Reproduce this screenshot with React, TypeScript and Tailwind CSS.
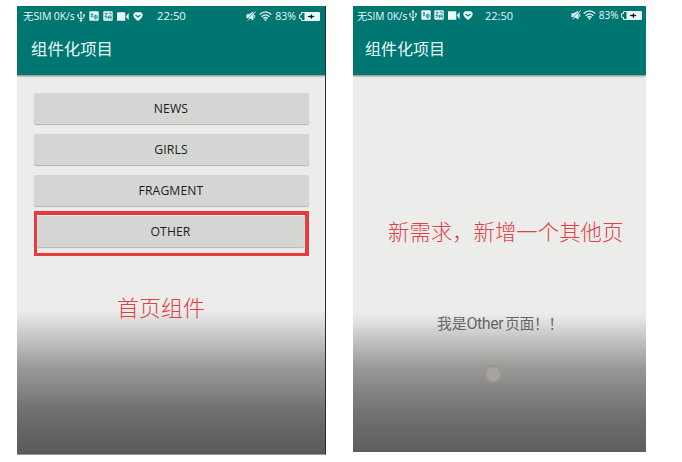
import type { ReactNode } from "react";

const UsbIcon = () => (
  <svg className="h-[11px] w-[8px] shrink-0" viewBox="0 0 8 11" fill="none" stroke="currentColor" strokeWidth="1">
    <path d="M4 1.5V9.5M1 4.2V6Q1 7.2 4 7.8Q7 7.2 7 6V4.2" />
    <path d="M4 0L5.6 2.3H2.4ZM.1 3.2h1.8v1.6H.1zM6.1 3.2h1.8v1.6H6.1z" fill="currentColor" stroke="none" />
    <circle cx="4" cy="9.6" r="1.2" fill="currentColor" stroke="none" />
  </svg>
);

const AppIcon = () => (
  <svg className="h-[10px] w-[10px] shrink-0" viewBox="0 0 10 10">
    <rect x=".3" y=".3" width="9.4" height="9.4" rx="1" fill="currentColor" />
    <path d="M1.6 3.3h2.6M3 1.8v4.6M1.6 5.8l2.6-1M5.2 4.8h3v2.4h-3zM6.7 3.4v5.2" fill="none" stroke="#007672" strokeWidth=".7" />
  </svg>
);

const TranslateIcon = () => (
  <svg className="h-[10px] w-[10px] shrink-0" viewBox="0 0 10 10">
    <rect x=".3" y=".3" width="9.4" height="9.4" rx="1" fill="currentColor" />
    <path d="M1.6 2.3h2.8L1.8 5.6h2.4M2 8.2l2.4-2.4M5.4 8.4V5h2.7v3.4M5.4 6.7h2.7M5.8 2h2.4v1.6" fill="none" stroke="#007672" strokeWidth=".8" />
  </svg>
);

const VideoIcon = () => (
  <svg className="h-[9px] w-[12px] shrink-0" viewBox="0 0 12 9" fill="currentColor">
    <rect x="0" y=".2" width="8.3" height="8.6" rx=".6" />
    <path d="M8.8 4.5L11.7 .8v7.4z" />
  </svg>
);

const ShieldIcon = () => (
  <svg className="h-[9px] w-[10px] shrink-0" viewBox="0 0 10 9">
    <path d="M2 .2h6L9.8 2.5Q9.6 6.2 5 9Q.4 6.2.2 2.5Z" fill="currentColor" />
    <path d="M2.5 2.8L5 5l2.5-2.2" fill="none" stroke="#007672" strokeWidth="1.1" />
  </svg>
);

const MuteIcon = () => (
  <svg className="h-[10px] w-[10px] shrink-0" viewBox="0 0 10 10">
    <path d="M.5 3.2h2.3L7.5.5v9L3.8 7.2H.5z" fill="currentColor" />
    <path d="M8.7.4L.9 9" stroke="#007672" strokeWidth=".8" />
    <path d="M9.8.4L1.8 9.5M8.7 4v3" stroke="currentColor" strokeWidth=".9" />
  </svg>
);

const WifiIcon = () => (
  <svg className="h-[10px] w-[13px] shrink-0" viewBox="0 0 13 10" fill="none" stroke="currentColor" strokeWidth="1.3">
    <path d="M.7 3.6Q6.5-1.8 12.3 3.6M2.6 5.7Q6.5 2.1 10.4 5.7M4.4 7.5Q6.5 5.6 8.6 7.5" />
    <circle cx="6.5" cy="8.8" r="1" fill="currentColor" stroke="none" />
  </svg>
);

const BatteryIcon = () => (
  <svg className="h-[9px] w-[21px] shrink-0" viewBox="0 0 21 9">
    <path d="M2.5.5H20.5v8H2.5V6.3H.5V2.7H2.5z" fill="none" stroke="currentColor" strokeWidth="1" />
    <rect x="5.5" y="1" width="15" height="7" fill="currentColor" />
    <path d="M9 4l2.6-.2.6-2.1 1 2.1 2 .2v1l-2 .2-.8 2.1-.9-2.1L9 5z" fill="#101c1b" />
  </svg>
);

type PhoneProps = {
  frame: string;
  carrier: string;
  icons: string;
  clock: string;
  signals: string;
  title: string;
  children: ReactNode;
};

function Phone({ frame, carrier, icons, clock, signals, title, children }: PhoneProps) {
  return (
    <section className={`flex shrink-0 flex-col overflow-hidden ${frame}`}>
      <header className="z-10 h-[69px] shrink-0 bg-[#007672] text-[#e6faf7] shadow-[0_1px_2px_#777]">
        <div className="flex h-[20px] items-center whitespace-nowrap leading-none">
          <span className={`shrink-0 ${carrier}`}>无SIM 0K/s</span>
          <div className={`flex shrink-0 items-center ${icons}`}>
            <UsbIcon />
            <AppIcon />
            <TranslateIcon />
            <VideoIcon />
            <ShieldIcon />
          </div>
          <span className={`shrink-0 ${clock}`}>22:50</span>
          <div className={`ml-auto flex shrink-0 items-center ${signals}`}>
            <MuteIcon />
            <WifiIcon />
            <span>83%</span>
            <BatteryIcon />
          </div>
        </div>
        <h1 className={`whitespace-nowrap font-normal leading-[20px] ${title}`}>组件化项目</h1>
      </header>
      {children}
    </section>
  );
}

const BUTTON =
  "flex h-[31px] w-full items-center justify-center rounded-[2px] bg-[#d4d6d4] pt-[2px] text-[12.2px] font-medium leading-none tracking-[0.1px] text-[#1c1c1c] shadow-[0_1px_1px_#b4b4b4]";

export default function App() {
  return (
    <main className="flex h-[462px] w-[682px] items-start gap-[27px] overflow-hidden bg-white pl-[17px] pt-[6px] font-['Open_Sans','Noto_Sans_CJK_SC',sans-serif]">
      <Phone
        frame="h-[449px] w-[309px] border-r border-b border-r-[#24302f] border-b-[#999]"
        carrier="ml-[6px] w-[53px] text-[10.5px] tracking-[-0.1px]"
        icons="ml-px gap-[4px]"
        clock="ml-[14px] w-[30px] text-[11.3px]"
        signals="mr-[5px] gap-[3px] text-[10.5px]"
        title="ml-[14px] mt-[13px] text-[16.4px]"
      >
        <div className="flex flex-1 flex-col items-center bg-[linear-gradient(#ececeb_0,#ececeb_235px,#dededd_245px,#c2c2c1_265px,#999998_293px,#858584_315px,#707070_335px,#636362_358px,#5b5b5a_380px)] pt-[18px]">
          <div className="flex w-[275px] flex-col gap-[10px]">
            <button className={BUTTON}>NEWS</button>
            <button className={BUTTON}>GIRLS</button>
            <button className={BUTTON}>FRAGMENT</button>
          </div>
          <div className="mt-[5px] h-[45px] w-[275px] border-4 border-b-[3px] border-l-[3px] border-[#e53b3c] bg-[#eeeae7] pt-px">
            <button className={BUTTON}>OTHER</button>
          </div>
          <p className="mt-[36px] -translate-x-[10px] whitespace-nowrap text-[22px] font-light leading-[30px] text-[#df4145]">首页组件</p>
        </div>
      </Phone>

      <Phone
        frame="h-[446px] w-[293px]"
        carrier="ml-[4px] w-[51px] text-[10.2px] tracking-[-0.1px]"
        icons="ml-px gap-[3.5px] -translate-y-px"
        clock="ml-[12px] w-[29px] -translate-y-px text-[11px]"
        signals="mr-[4px] gap-[2.5px] -translate-y-px text-[10px]"
        title="ml-[12px] mt-[13px] text-[16px]"
      >
        <div className="flex flex-1 flex-col bg-[linear-gradient(#ececeb_0,#ececeb_238px,#dededd_248px,#c2c2c1_265px,#999998_293px,#858584_315px,#707070_340px,#646464_365px,#5e5e5e_377px)]">
          <p className="ml-[35px] mt-[142px] whitespace-nowrap text-[21.4px] font-light leading-[30px] text-[#df4145]">新需求，新增一个其他页</p>
          <p className="ml-[84px] mt-[65px] whitespace-nowrap text-[14.8px] leading-[22px] text-[#666]">
            我是<span className="mr-[2px] font-['Roboto'] text-[16px] tracking-[-0.5px]">Other</span>
            <span className="tracking-[-0.3px]">页面！！</span>
          </p>
          <div className="ml-[131px] mt-[30px] h-[18px] w-[18px] rounded-full border-2 border-[#9b9784] bg-[#a5a4a0]" />
        </div>
      </Phone>
    </main>
  );
}
